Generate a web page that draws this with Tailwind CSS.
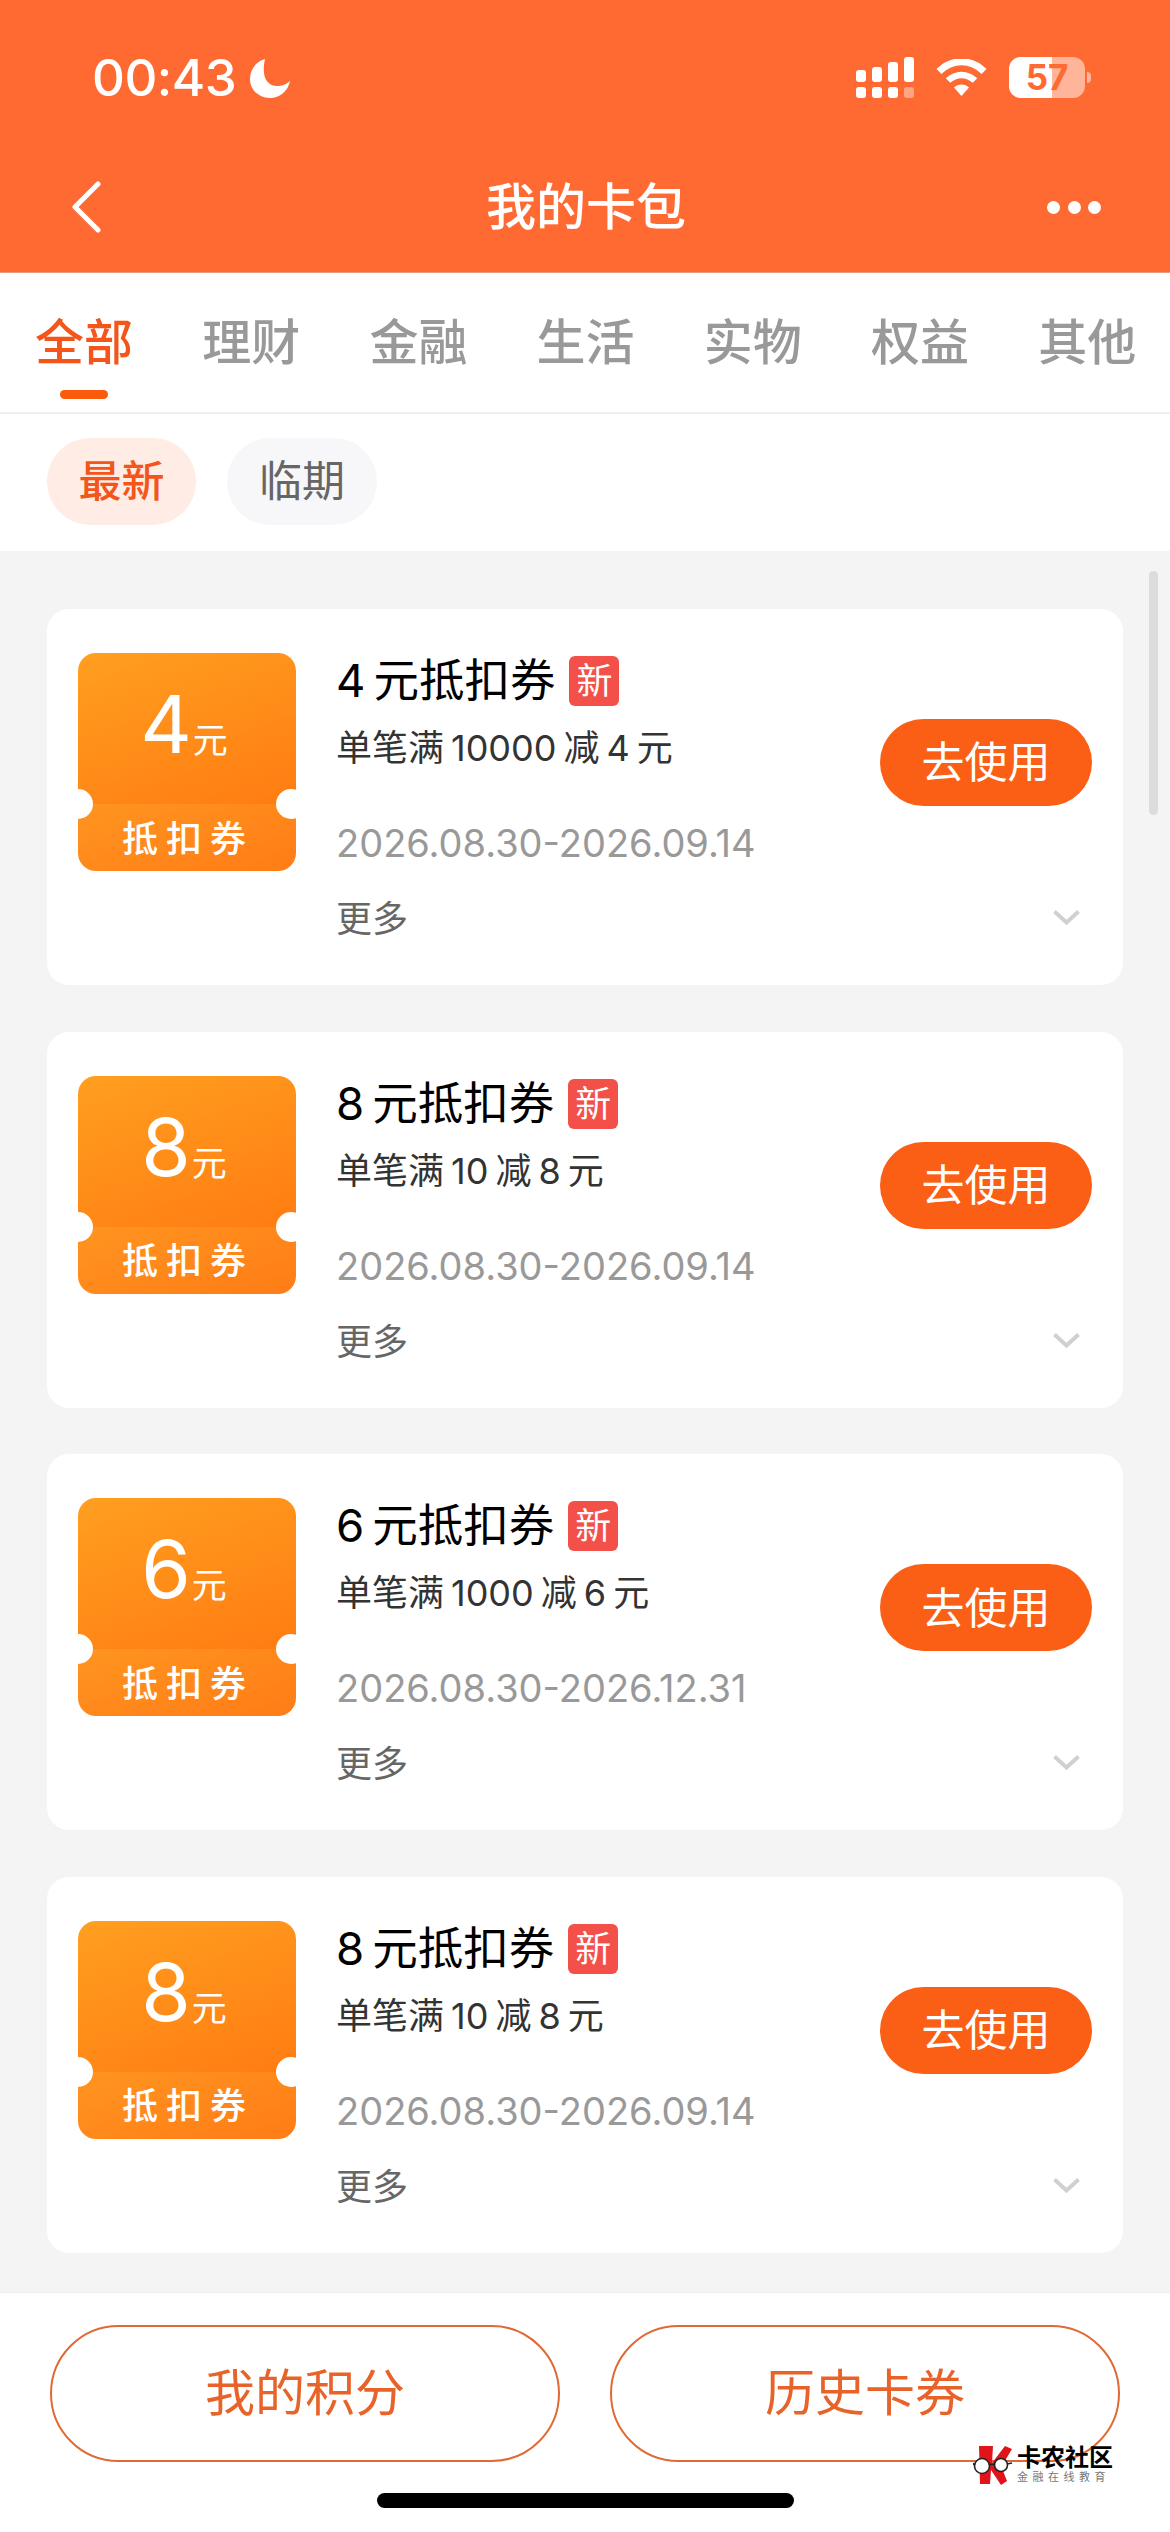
<!DOCTYPE html>
<html lang="zh-CN">

<head>
  <meta charset="UTF-8">
  <meta name="viewport" content="width=device-width, initial-scale=1.0">
  <title>我的卡包</title>
  <script src="https://cdn.jsdelivr.net/npm/@tailwindcss/browser@4"></script>
</head>

<body>
  <div class="w-[1170px] h-[2532px] flex flex-col overflow-hidden bg-white font-[family-name:Inter,'Noto_Sans_CJK_SC',sans-serif]">

    <!-- status bar + title bar -->
    <header class="h-[273px] shrink-0 bg-[#ff6a33] text-white border-b border-[#e89a7c]">
      <div class="flex justify-between items-center pt-[57px] pl-[92px] pr-[79px] h-[98px]">
        <div class="flex items-center gap-[14px]">
          <span class="text-[51px] leading-[41px] font-medium tracking-[-0.5px]">00:43</span>
          <svg class="w-[40px] h-[40px]" viewBox="0 0 40 40" fill="#fff">
            <path d="M15 1C5 4 0 12 0 21c0 11 9 19 20 19 10 0 18-7 20-17-4 4-9 5-13 5C17 28 11 19 15 1Z" />
          </svg>
        </div>
        <div class="flex items-center">
          <svg class="w-[58px] h-[41px]" viewBox="0 0 58 41" fill="#fff">
            <rect x="0" y="13" width="10" height="12" rx="3" />
            <rect x="16" y="10" width="10" height="15" rx="3" />
            <rect x="32" y="5" width="10" height="20" rx="3" />
            <rect x="48" y="0" width="10" height="25" rx="3" />
            <rect x="0" y="30" width="10" height="11" rx="3" />
            <rect x="16" y="30" width="10" height="11" rx="3" />
            <rect x="32" y="30" width="10" height="11" rx="3" />
            <rect x="48" y="30" width="10" height="11" rx="3" fill-opacity="0.4" />
          </svg>
          <svg class="w-[51px] h-[37px] ml-[22px]" viewBox="0 0 51 37" fill="none" stroke="#fff">
            <path d="M3 12.5C16 -0.5 35 -0.5 48 12.5" stroke-width="7" />
            <path d="M12 21.5C20 14 31 14 39 21.5" stroke-width="6.5" />
            <path d="M18 28.5C22 24.5 29 24.5 33 28.5L25.5 37Z" fill="#fff" stroke="none" />
          </svg>
          <div class="relative w-[76px] h-[41px] ml-[22px] rounded-[12px] overflow-hidden bg-white/50">
            <div class="absolute inset-y-0 left-0 w-[43px] bg-white"></div>
            <span class="absolute inset-0 flex items-center justify-center text-[35px] font-bold text-[#ff6a33]">57</span>
          </div>
          <div class="w-[4px] h-[11px] ml-[2px] rounded-r-full bg-white/50"></div>
        </div>
      </div>
      <div class="flex justify-between items-center h-[80px] mt-[69px] pl-[71px] pr-[69px]">
        <div class="w-[54px]">
          <svg class="w-[30px] h-[52px]" viewBox="0 0 30 52" fill="none" stroke="#fff" stroke-width="5" stroke-linecap="round" stroke-linejoin="round">
            <path d="M27 3 4 26l23 23" />
          </svg>
        </div>
        <h1 class="text-[50px] leading-[56px] font-medium">我的卡包</h1>
        <div class="w-[54px] flex justify-between">
          <span class="w-[13px] h-[13px] rounded-full bg-white"></span>
          <span class="w-[13px] h-[13px] rounded-full bg-white"></span>
          <span class="w-[13px] h-[13px] rounded-full bg-white"></span>
        </div>
      </div>
    </header>

    <!-- category tabs -->
    <nav class="h-[141px] shrink-0 flex items-start gap-[69.2px] pl-[35px] pt-[42px] text-[49px] leading-[56px] font-medium text-[#999] border-b-2 border-[#eeeeee]">
      <div class="flex flex-col items-center text-[#f4551a]">
        <span>全部</span>
        <span class="block w-[48px] h-[9px] mt-[19px] rounded-full bg-[#fb5a0a]"></span>
      </div>
      <span>理财</span>
      <span>金融</span>
      <span>生活</span>
      <span>实物</span>
      <span>权益</span>
      <span>其他</span>
    </nav>

    <!-- sort filters -->
    <div class="h-[137px] shrink-0 flex gap-[31px] pl-[47px] pt-[24px] text-[43px]">
      <button class="w-[149px] h-[87px] rounded-full bg-[#feece5] text-[#f4551a] font-medium">最新</button>
      <button class="w-[150px] h-[87px] rounded-full bg-[#f7f7f9] text-[#666]">临期</button>
    </div>

    <!-- coupon list -->
    <main class="relative flex-1 min-h-0 overflow-hidden bg-[#f4f4f4] px-[47px] pt-[58px]">
      <div id="coupons" class="flex flex-col gap-[46.67px]"></div>
      <div class="absolute left-[1149px] top-[20px] w-[9px] h-[244px] rounded-full bg-[#dcdcdc]"></div>
    </main>

    <!-- bottom actions -->
    <footer class="relative h-[240px] shrink-0 bg-white border-t border-[#eeeeee] pt-[32px]">
      <div class="flex gap-[50px] pl-[50px] text-[50px] text-[#e8632a]">
        <button class="w-[510px] h-[137px] rounded-full border-2 border-[#df6a35]">我的积分</button>
        <button class="w-[510px] h-[137px] rounded-full border-2 border-[#df6a35]">历史卡券</button>
      </div>
      <div class="w-[417px] h-[15px] mt-[31px] ml-[377px] rounded-full bg-black"></div>

      <!-- community watermark -->
      <div class="absolute left-[973px] top-[152px] flex items-start">
        <svg class="w-[40px] h-[40px]" viewBox="0 0 40 40">
          <path d="M6 1h14l-1 17 13-17 7 3-9 15-2 2 6 15-6 4-10-15-1 14H7Z" fill="#e1141c" />
          <circle cx="9" cy="21" r="7.5" fill="#fff" stroke="#222" stroke-width="1.6" />
          <circle cx="28" cy="20" r="6.5" fill="#fff" stroke="#222" stroke-width="1.6" />
          <path d="M16 20c2-1 4-1 6 0M1 20 0 18M34 19l5-1" fill="none" stroke="#222" stroke-width="1.6" />
        </svg>
        <div class="ml-[4px]">
          <div class="text-[24px] leading-[25px] font-bold text-black whitespace-nowrap">卡农社区</div>
          <div class="text-[11px] leading-[13px] mt-[1px] tracking-[4.5px] text-[#777] whitespace-nowrap">金融在线教育</div>
        </div>
      </div>
    </footer>
  </div>

  <script>
    const coupons = [
      { amount: 4, min: "10000", end: "2026.09.14" },
      { amount: 8, min: "10", end: "2026.09.14" },
      { amount: 6, min: "1000", end: "2026.12.31" },
      { amount: 8, min: "10", end: "2026.09.14" },
    ];

    const renderCoupon = (coupon) => `
      <article class="h-[376px] flex pt-[44px] pl-[31px] pr-[31px] rounded-[22px] bg-white">
        <div class="relative w-[218px] h-[218px] shrink-0 rounded-[18px] overflow-hidden text-white">
          <div class="h-[151px] pt-[26px] pr-[6px] flex justify-center items-baseline bg-[linear-gradient(160deg,#ff9f20,#ff7c12)]">
            <span class="text-[80px] leading-[90px] font-normal">${coupon.amount}</span>
            <span class="text-[35px] ml-[1px]">元</span>
          </div>
          <div class="h-[67px] pt-[2px] pl-[2px] flex justify-center items-center text-[36px] font-medium tracking-[8px] bg-[linear-gradient(160deg,#ff9520,#ff7c16)]">抵扣券</div>
          <span class="absolute left-[-15px] top-[136px] w-[30px] h-[30px] rounded-full bg-white"></span>
          <span class="absolute right-[-10px] top-[136px] w-[30px] h-[30px] rounded-full bg-white"></span>
        </div>
        <div class="flex-1 ml-[40px] text-[#333]">
          <div class="flex items-center h-[56px]">
            <span class="text-[45.5px] leading-[56px] text-black"><span class="mr-[8px]">${coupon.amount}</span>元抵扣券</span>
            <span class="w-[50px] h-[50px] ml-[14px] flex items-center justify-center rounded-[6px] bg-[#f4504a] text-[36px] leading-none text-white">新</span>
          </div>
          <p class="text-[36px] leading-[56px] mt-[11px]">单笔满<span class="mx-[7px]">${coupon.min}</span>减<span class="mx-[7px]">${coupon.amount}</span>元</p>
          <p class="text-[38px] leading-[56px] mt-[39px] text-[#999]">2026.08.30-${coupon.end}</p>
          <p class="text-[36px] leading-[56px] mt-[20px] text-[#666]">更多</p>
        </div>
        <div class="flex flex-col items-end">
          <button class="w-[212px] h-[87px] mt-[66px] rounded-full bg-[#fb5e15] text-[43px] text-white">去使用</button>
          <svg class="w-[27px] h-[15px] mt-[104px] mr-[12px]" viewBox="0 0 27 15" fill="none" stroke="#d0d0d0" stroke-width="4">
            <path d="M1.5 1.5 13.5 12.5 25.5 1.5" />
          </svg>
        </div>
      </article>`;

    document.getElementById("coupons").innerHTML = coupons.map(renderCoupon).join("");
  </script>
</body>

</html>
